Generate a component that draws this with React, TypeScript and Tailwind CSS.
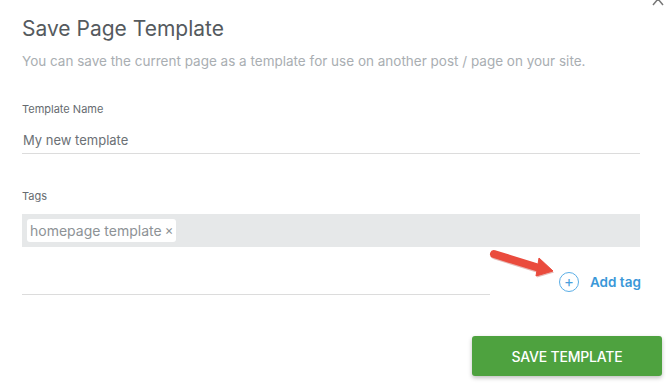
import React from 'react';

const App: React.FC = () => {
  return (
    <div className="relative w-[666px] h-[388px] bg-white overflow-hidden font-['Inter',sans-serif]">
      {/* close icon, cut off at the top edge */}
      <svg className="absolute right-[2px] top-[-6px]" width="12" height="12" viewBox="0 0 12 12">
        <path d="M1 11 L6 5 L11 11" stroke="#777" strokeWidth="1.5" fill="none" />
      </svg>

      <div className="pl-[22px] pr-[26px] pt-[15px]">
        <h1 className="text-[21px] leading-[28px] text-[#555a5e] font-normal">Save Page Template</h1>
        <p className="mt-[9px] text-[13.5px] leading-[18px] text-[#a9aeb2] whitespace-nowrap">
          You can save the current page as a template for use on another post / page on your site.
        </p>

        <label className="block mt-[31px] text-[11px] leading-[16px] text-[#666b70]">Template Name</label>
        <div className="mt-[10px] h-[27px] pt-[4px] border-b border-[#dcdcdc] flex items-start">
          <span className="pl-[1px] text-[13px] leading-[18px] text-[#6b7075]">My new template</span>
        </div>

        <label className="block mt-[34px] text-[11px] leading-[16px] text-[#666b70]">Tags</label>
        <div className="mt-[10px] h-[33px] bg-[#e6e8e9] flex items-center px-[5px]">
          <span className="bg-white rounded-[3px] h-[23px] px-[3px] flex items-center text-[14px] text-[#8d9296]">
            homepage template <span className="ml-[3px] text-[13px]">×</span>
          </span>
        </div>

        <div className="flex items-end">
          <div className="w-[468px] shrink-0 h-[48px] border-b border-[#dcdcdc]" />
          <div className="ml-[69px] mb-[3px] flex items-center shrink-0 whitespace-nowrap">
            <span className="w-[20px] h-[20px] rounded-full border border-[#5aaee6] flex items-center justify-center text-[#4a9fdc] text-[15px] leading-none">+</span>
            <span className="ml-[11px] text-[13.5px] font-semibold text-[#3a98d8]">Add tag</span>
          </div>
        </div>
      </div>

      <div className="flex justify-end pr-[4px] mt-[41px]">
        <button className="w-[190px] h-[40px] bg-[#4ea23f] rounded-[3px] shadow-[0_2px_4px_rgba(0,0,0,0.25)] text-white text-[14px] font-medium tracking-[-0.2px]">
          SAVE TEMPLATE
        </button>
      </div>

      {/* annotation arrow */}
      <svg className="absolute left-[488px] top-[247px]" width="70" height="34" viewBox="0 0 70 34">
        <path d="M6 7 L48 20" stroke="#b8352b" strokeOpacity="0.35" strokeWidth="8" strokeLinecap="round" fill="none" transform="translate(1 1.5)" />
        <path d="M51 11 L65 24 L48 29 Z" fill="#b8352b" fillOpacity="0.35" transform="translate(1 1.5)" />
        <path d="M6 7 L48 20" stroke="#ea4b3d" strokeWidth="8" strokeLinecap="round" fill="none" />
        <path d="M51 11 L65 24 L48 29 Z" fill="#ea4b3d" strokeLinejoin="round" stroke="#ea4b3d" strokeWidth="1" />
      </svg>
    </div>
  );
};

export default App;
